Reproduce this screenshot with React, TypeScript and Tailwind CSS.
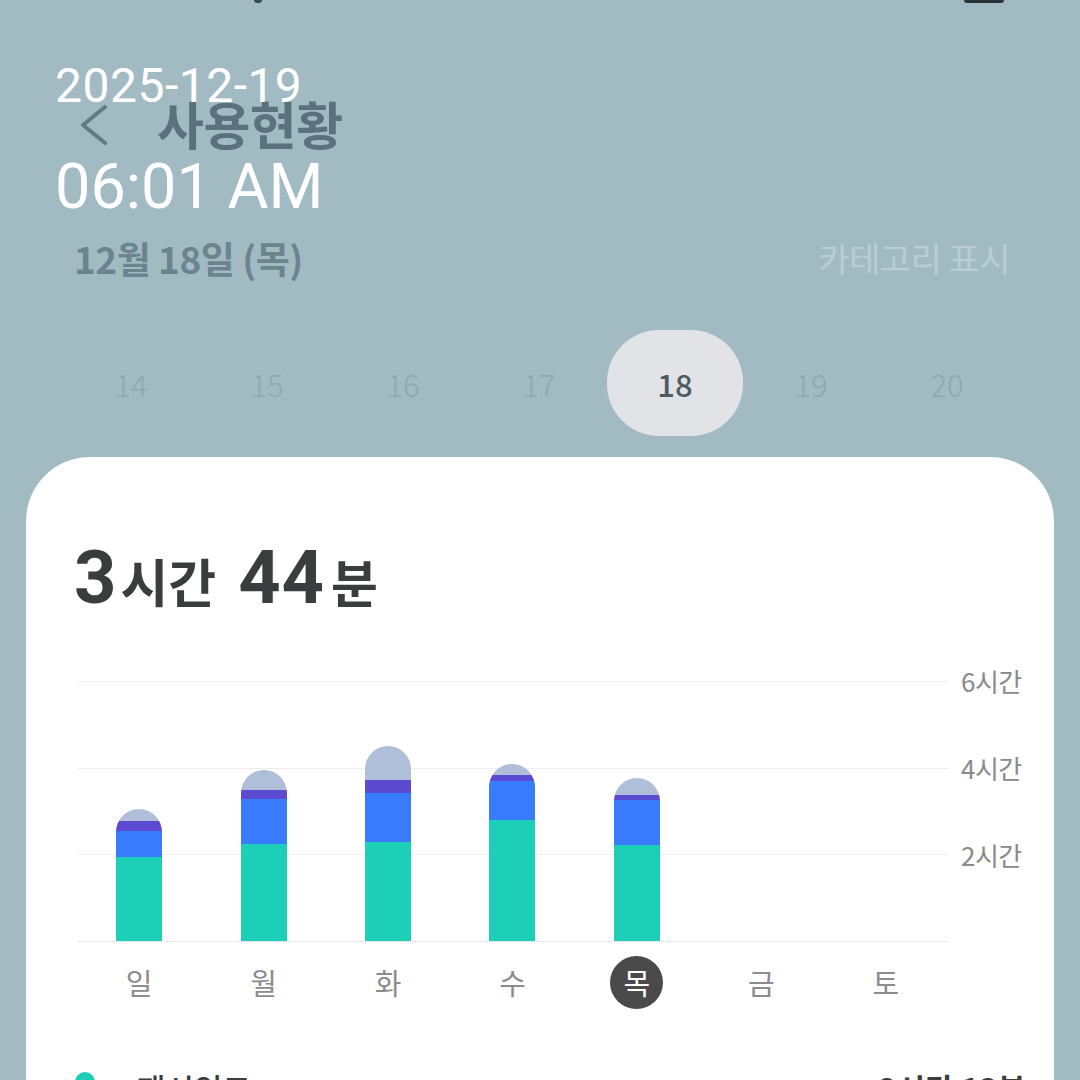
import React from 'react';

// 막대 데이터 (px, 아래에서부터: 초록, 파랑, 보라, 회색)
const bars = [
  { day: '일', green: 84, blue: 26, purple: 10, gray: 12 },
  { day: '월', green: 97, blue: 45, purple: 9, gray: 20 },
  { day: '화', green: 99, blue: 49, purple: 13, gray: 34 },
  { day: '수', green: 121, blue: 39, purple: 6, gray: 11 },
  { day: '목', green: 96, blue: 45, purple: 5, gray: 17, active: true },
  { day: '금' },
  { day: '토' },
];

const dates = [14, 15, 16, 17, 18, 19, 20];

const Bar: React.FC<{ green?: number; blue?: number; purple?: number; gray?: number }> = ({ green, blue, purple, gray }) => {
  if (!green) return <div />;
  return (
    <div className="flex justify-center">
      <div className="w-[46px] rounded-t-[23px] overflow-hidden flex flex-col">
        <div className="bg-[#b0bfd9]" style={{ height: gray }} />
        <div className="bg-[#5c4bd1]" style={{ height: purple }} />
        <div className="bg-[#387bfd]" style={{ height: blue }} />
        <div className="bg-[#1ecfb7]" style={{ height: green }} />
      </div>
    </div>
  );
};

export default function App() {
  return (
    <div className="relative w-[1080px] h-[1080px] overflow-hidden bg-[#a2bbc2] flex flex-col font-['Noto_Sans_CJK_KR',sans-serif]">
      {/* 상태바 잔상 */}
      <div className="h-[4px] flex shrink-0">
        <div className="ml-[254px] w-[8px] h-[3px] rounded-b-full bg-[#3a4a52]" />
        <div className="ml-[702px] w-[40px] h-[3px] rounded-b-[3px] bg-[#2b3338]" />
      </div>

      {/* 헤더 */}
      <div className="flex items-center h-[56px] mt-[91px] pl-[76px] shrink-0">
        <svg width="34" height="44" viewBox="0 0 34 44" fill="none">
          <path d="M29 6 L7 24 L29 42" stroke="#647b86" strokeWidth="4" strokeLinecap="round" strokeLinejoin="round" />
        </svg>
        <div className="ml-[47px] text-[51px] leading-[56px] font-bold text-[#5b717c] tracking-[-0.5px]">사용현황</div>
      </div>

      <div className="flex items-center justify-between pl-[74px] pr-[70px] mt-[87px] h-[40px] shrink-0">
        <div className="text-[37px] leading-[40px] font-semibold text-[#6c8490] tracking-[-0.5px]">12월 18일 (목)</div>
        <div className="text-[34px] leading-[40px] text-[#b9cdd2] tracking-[-0.5px]">카테고리 표시</div>
      </div>

      {/* 날짜 선택 */}
      <div className="flex pl-[63px] mt-[52px] shrink-0">
        {dates.map(d => (
          <div
            key={d}
            className={`w-[136px] h-[106px] rounded-[52px] flex items-center justify-center text-[31px] leading-none ${d === 18 ? 'bg-[#e2e3e6] text-[#4d5b62] font-medium' : 'text-[#91a8b0] font-light'}`}
          >
            {d}
          </div>
        ))}
      </div>

      {/* 카드 */}
      <div className="mt-[21px] mx-[26px] flex-1 bg-white rounded-t-[64px] flex flex-col">
        <div className="flex items-baseline pl-[48px] mt-[81px] h-[80px] text-[#3b3c3e] font-bold">
          <span className="text-[74px] leading-[80px] font-['Roboto',sans-serif]">3</span>
          <span className="text-[52px] ml-[4px]">시간</span>
          <span className="text-[74px] leading-[80px] ml-[22px] font-['Roboto',sans-serif] tracking-[1px]">44</span>
          <span className="text-[51px] ml-[6px]">분</span>
        </div>

        {/* 차트 */}
        <div className="flex ml-[51px] mt-[63px]">
          <div className="w-[871px] grid">
            <div className="col-start-1 row-start-1 h-[261px] flex flex-col justify-between">
              <div className="h-[1px] bg-[#eeeeee]" />
              <div className="h-[1px] bg-[#eeeeee]" />
              <div className="h-[1px] bg-[#eeeeee]" />
              <div className="h-[1px] bg-[#e9e9e9]" />
            </div>
            <div className="col-start-1 row-start-1 h-[260px] grid grid-cols-7 items-end">
              {bars.map(b => (
                <Bar key={b.day} green={b.green} blue={b.blue} purple={b.purple} gray={b.gray} />
              ))}
            </div>
          </div>
          <div className="ml-[13px] -mt-[14px] h-[275px] flex flex-col text-[26px] leading-[28px] text-[#8a8a8a] tracking-[-0.5px]">
            <div className="h-[28px]">6시간</div>
            <div className="h-[28px] mt-[59px]">4시간</div>
            <div className="h-[28px] mt-[59px]">2시간</div>
          </div>
        </div>

        {/* 요일 */}
        <div className="w-[871px] ml-[51px] mt-[14px] grid grid-cols-7">
          {bars.map(b => (
            <div key={b.day} className="flex justify-center">
              <div
                className={`w-[53px] h-[53px] rounded-full flex items-center justify-center text-[29px] leading-none ${b.active ? 'bg-[#4a4a4a] text-white' : 'text-[#8c8c8c]'}`}
              >
                {b.day}
              </div>
            </div>
          ))}
        </div>

        {/* 범례 */}
        <div className="flex items-start pl-[49px] pr-[28px] mt-[59px]">
          <div className="w-[20px] h-[20px] mt-[4px] rounded-full bg-[#1ecfb7]" />
          <div className="ml-[42px] text-[31px] leading-[40px] font-medium text-[#3b3c3e]">패시인크</div>
          <div className="ml-auto text-[31px] leading-[40px] font-semibold text-[#3b3c3e]">2시간 13분</div>
        </div>
      </div>

      {/* 날짜/시간 오버레이 */}
      <div className="absolute left-[55px] top-[58px] text-white font-['Roboto',sans-serif]">
        <div className="text-[48px] leading-[56px] tracking-[0.5px]">2025-12-19</div>
        <div className="text-[63px] leading-[74px] mt-[36px]">06:01 AM</div>
      </div>
    </div>
  );
}
